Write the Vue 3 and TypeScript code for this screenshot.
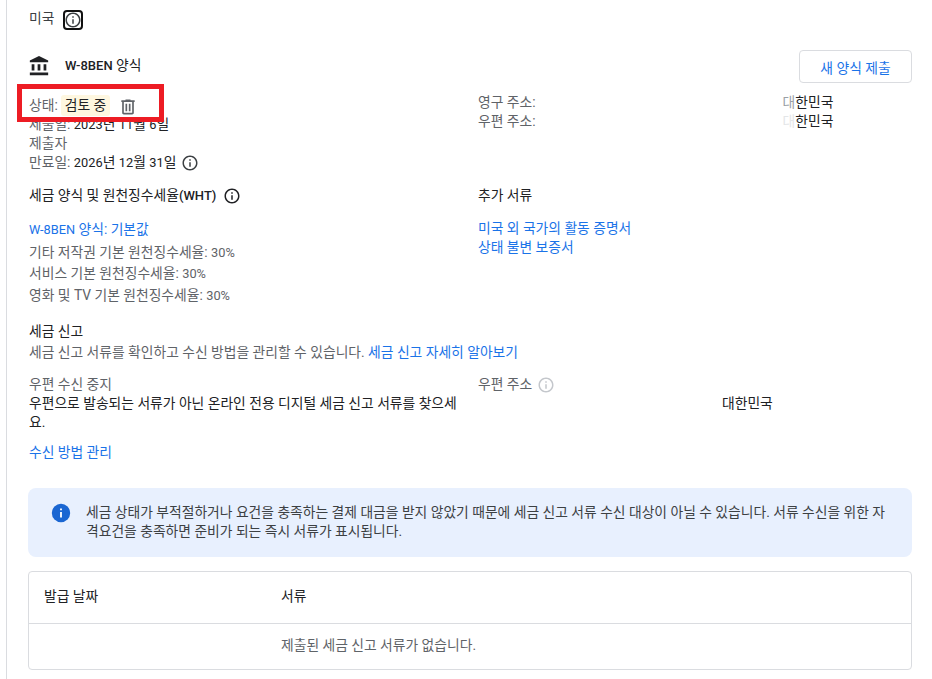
<script setup lang="ts">
const rates: string[] = [
  '기타 저작권 기본 원천징수세율:',
  '서비스 기본 원천징수세율:',
  '영화 및 TV 기본 원천징수세율:',
]
</script>

<template>
  <div class="page">
    <div class="country">
      <span>미국</span>
      <span class="focus-icon">
        <svg width="18" height="18" viewBox="0 0 24 24"><path fill="#3c4043" d="M11 7h2v2h-2zm0 4h2v6h-2zm1-9C6.48 2 2 6.48 2 12s4.48 10 10 10 10-4.48 10-10S17.52 2 12 2zm0 18c-4.41 0-8-3.59-8-8s3.59-8 8-8 8 3.59 8 8-3.59 8-8 8z"/></svg>
      </span>
    </div>

    <div class="form-head">
      <div class="form-title">
        <svg class="bank" width="22" height="22" viewBox="0 0 24 24"><path fill="#202124" d="M4 10h3v7H4zm6.5 0h3v7h-3zM2 19h20v3H2zm15-9h3v7h-3zM12 1 2 6v2h20V6z"/></svg>
        <span><b class="small">W-8BEN</b> 양식</span>
      </div>
      <button class="btn" type="button">새 양식 제출</button>
    </div>

    <div class="two-col details">
      <div class="lines">
        <div class="status-line">
          <span class="muted">상태:</span>
          <span class="chip">검토 중</span>
          <svg class="trash" width="20" height="20" viewBox="0 0 24 24"><path fill="#5f6368" d="M15 4V3H9v1H4v2h1v13c0 1.1.9 2 2 2h10c1.1 0 2-.9 2-2V6h1V4h-5zm2 15H7V6h10v13zM9 8h2v9H9zm4 0h2v9h-2z"/></svg>
        </div>
        <div><span class="muted">제출일:</span> <span class="num">2023</span>년 <span class="num">11</span>월 <span class="num">6</span>일</div>
        <div><span class="muted">제출자</span></div>
        <div class="with-icon">
          <span><span class="muted">만료일:</span> <span class="num">2026</span>년 <span class="num">12</span>월 <span class="num">31</span>일</span>
          <svg width="18" height="18" viewBox="0 0 24 24"><path fill="#3c4043" d="M11 7h2v2h-2zm0 4h2v6h-2zm1-9C6.48 2 2 6.48 2 12s4.48 10 10 10 10-4.48 10-10S17.52 2 12 2zm0 18c-4.41 0-8-3.59-8-8s3.59-8 8-8 8 3.59 8 8-3.59 8-8 8z"/></svg>
        </div>
      </div>
      <div class="address">
        <div class="addr-row"><span class="muted">영구 주소:</span><span class="blank"></span><span><span class="ghost half">대</span>한민국</span></div>
        <div class="addr-row"><span class="muted">우편 주소:</span><span class="blank"></span><span><span class="ghost">대</span>한민국</span></div>
      </div>
    </div>

    <div class="two-col tax">
      <div>
        <div class="heading with-icon wide">
          <span>세금 양식 및 원천징수세율<b class="small">(WHT)</b></span>
          <svg width="18" height="18" viewBox="0 0 24 24"><path fill="#202124" d="M11 7h2v2h-2zm0 4h2v6h-2zm1-9C6.48 2 2 6.48 2 12s4.48 10 10 10 10-4.48 10-10S17.52 2 12 2zm0 18c-4.41 0-8-3.59-8-8s3.59-8 8-8 8 3.59 8 8-3.59 8-8 8z"/></svg>
        </div>
        <a class="link first"><span class="num">W-8BEN</span> 양식: 기본값</a>
        <div v-for="rate in rates" :key="rate" class="rate muted">{{ rate }} <span class="num">30%</span></div>
      </div>
      <div>
        <div class="heading">추가 서류</div>
        <a class="link doc first-doc">미국 외 국가의 활동 증명서</a>
        <a class="link doc">상태 불변 보증서</a>
      </div>
    </div>

    <section class="report">
      <div class="heading">세금 신고</div>
      <p class="report-text"><span class="muted">세금 신고 서류를 확인하고 수신 방법을 관리할 수 있습니다.</span> <a class="link inline">세금 신고 자세히 알아보기</a></p>
    </section>

    <div class="two-col delivery">
      <div class="delivery-left">
        <div class="muted">우편 수신 중지</div>
        <div class="body">우편으로 발송되는 서류가 아닌 온라인 전용 디지털 세금 신고 서류를 찾으세요.</div>
      </div>
      <div>
        <div class="with-icon muted">
          <span>우편 주소</span>
          <svg width="18" height="18" viewBox="0 0 24 24"><path fill="#c4c7cc" d="M11 7h2v2h-2zm0 4h2v6h-2zm1-9C6.48 2 2 6.48 2 12s4.48 10 10 10 10-4.48 10-10S17.52 2 12 2zm0 18c-4.41 0-8-3.59-8-8s3.59-8 8-8 8 3.59 8 8-3.59 8-8 8z"/></svg>
        </div>
        <div class="addr-row body mail"><span class="blank"></span><span>대한민국</span></div>
      </div>
    </div>

    <a class="link manage">수신 방법 관리</a>

    <div class="notice">
      <svg class="notice-icon" width="22" height="22" viewBox="0 0 24 24"><circle cx="12" cy="12" r="10" fill="#1a66d2"/><path fill="#fff" d="M11 7h2v2h-2zm0 4h2v6h-2z"/></svg>
      <p>세금 상태가 부적절하거나 요건을 충족하는 결제 대금을 받지 않았기 때문에 세금 신고 서류 수신 대상이 아닐 수 있습니다. 서류 수신을 위한 자격요건을 충족하면 준비가 되는 즉시 서류가 표시됩니다.</p>
    </div>

    <div class="table">
      <div class="row head"><span>발급 날짜</span><span>서류</span></div>
      <div class="row empty"><span></span><span>제출된 세금 신고 서류가 없습니다.</span></div>
    </div>

    <div class="annotation" aria-hidden="true"></div>
  </div>
</template>

<style>
html, body { margin: 0; background: #fff; }
</style>

<style scoped>
.page {
  position: relative;
  box-sizing: border-box;
  width: 926px;
  height: 679px;
  overflow: hidden;
  margin-left: 6px;
  border-left: 1px solid #dadce0;
  padding: 10px 20px 0 22px;
  font: 13.8px/19px Roboto, "Noto Sans CJK KR", sans-serif;
  color: #202124;
}
b { font-weight: 500; }
.small { font-size: 13px; }
.num { font-size: 12.8px; }
.muted { color: #5f6368; }
.ghost { color: #e4e6e8; }
.half { color: #9aa0a6; }
.country { display: flex; align-items: center; gap: 9px; height: 20px; color: #3c4043; }
.country span:first-child { position: relative; top: -2px; }
.focus-icon {
  box-sizing: border-box; width: 20px; height: 20px; display: flex; align-items: center; justify-content: center;
  border: 2.5px solid #111; border-radius: 4px;
}
.focus-icon svg { flex: none; }
.form-head { display: flex; justify-content: space-between; align-items: center; margin-top: 20px; height: 33px; }
.form-title { display: flex; align-items: center; gap: 15px; margin-top: -2px; }
.form-title svg { margin-left: -1px; }
.btn {
  box-sizing: border-box; width: 113px; height: 33px; background: #fff; border: 1px solid #dadce0; border-radius: 4px;
  color: #1a73e8; font: 400 13.8px Roboto, "Noto Sans CJK KR", sans-serif; padding: 0;
}
.two-col { display: grid; grid-template-columns: 449px 434px; }
.details { margin-top: 12px; }
.status-line { display: flex; align-items: center; height: 20px; }
.status-line .muted { margin-top: 1px; }
.chip { background: #fef7e0; border-radius: 3px; padding: 0 4px; margin-left: 3px; height: 21px; line-height: 20px; color: #202124; }
.trash { margin-left: 8px; margin-top: 3px; }
.with-icon { display: flex; align-items: center; gap: 5px; }
.wide { gap: 7px; }
.address { margin-top: -2px; }
.addr-row { display: flex; }
.addr-row .blank { width: 247px; }
.tax { margin-top: 14px; }
.heading { color: #202124; min-height: 19px; }
.link { display: block; color: #1a73e8; cursor: pointer; }
.link.inline { display: inline; }
.first { margin-top: 15px; height: 21.5px; }
.rate { height: 21.5px; line-height: 21.5px; }
.first-doc { margin-top: 14px; }
.doc { height: 19px; }
.report { margin-top: 16px; }
.report-text { margin: 2px 0 0; }
.delivery { margin-top: 13px; }
.delivery-left { padding-right: 19px; word-break: break-all; }
.body { color: #202124; }
.mail .blank { width: 244px; }
.manage { margin-top: 11px; }
.notice {
  display: flex; gap: 14px; box-sizing: border-box; height: 69px; margin: 26px 0 14px -1px; padding: 15px 24px 0 22px;
  background: #e8f0fe; border-radius: 8px;
}
.notice-icon { flex: none; margin-top: -1px; }
.notice p { margin: 0; color: #3c4043; line-height: 19px; word-break: break-all; }
.table { box-sizing: border-box; margin-left: -1px; height: 99px; border: 1px solid #dadce0; border-radius: 4px; }
.row { display: grid; grid-template-columns: 237px 1fr; padding-left: 15px; align-items: center; }
.head { box-sizing: content-box; height: 49px; padding-bottom: 2px; border-bottom: 1px solid #dadce0; }
.empty { box-sizing: border-box; height: 45px; padding-bottom: 2px; color: #5f6368; }
.annotation {
  position: absolute; left: 10px; top: 84px; box-sizing: border-box; width: 147px; height: 38px;
  border: 5px solid #ed1c24; pointer-events: none;
}
</style>
